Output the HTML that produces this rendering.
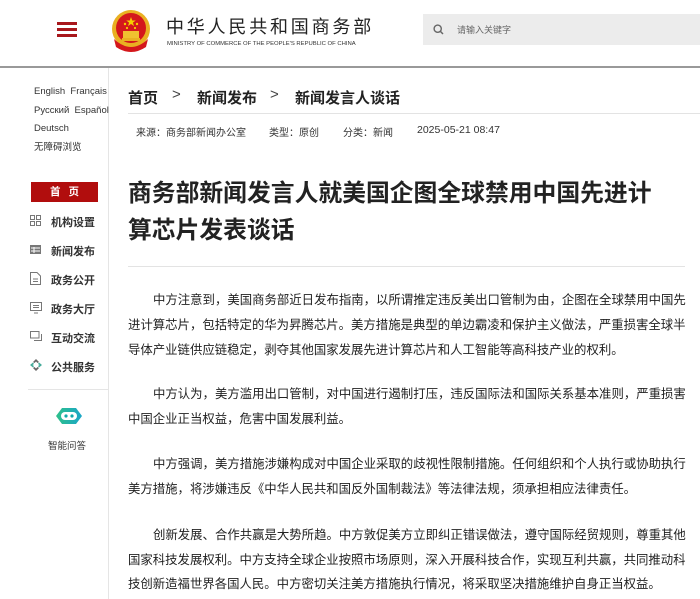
<!DOCTYPE html>
<html><head><meta charset="utf-8"><style>
*{margin:0;padding:0;box-sizing:border-box}
body{width:700px;height:599px;overflow:hidden;background:#fff;font-family:"Liberation Sans","Noto Sans CJK SC",sans-serif;color:#222;position:relative}
.a{position:absolute;white-space:nowrap}
.bar{position:absolute;left:57px;width:20px;height:3px;background:#a8171c}
.ln{position:absolute;left:128px;width:557px;font-size:12.4px;color:#222;text-align:justify;text-align-last:justify;white-space:nowrap;height:18px;line-height:18px}
.ln.l{text-align-last:left}
.mi{position:absolute;left:51px;font-size:11px;font-weight:bold;color:#333}
.ic{position:absolute;left:30px}
</style></head><body>
<div class="bar" style="top:22px"></div><div class="bar" style="top:28px"></div><div class="bar" style="top:34px"></div>
<svg class="a" style="left:110px;top:9px" width="42" height="44" viewBox="0 0 42 44">
<circle cx="21" cy="20" r="19" fill="#e9b022"/><circle cx="21" cy="19" r="15" fill="#d4171c"/>
<polygon points="21,8 22.2,11.5 25.8,11.5 22.9,13.6 24,17 21,15 18,17 19.1,13.6 16.2,11.5 19.8,11.5" fill="#f5d000"/>
<circle cx="15" cy="15" r="1.2" fill="#f5d000"/><circle cx="27" cy="15" r="1.2" fill="#f5d000"/><circle cx="17" cy="19" r="1.1" fill="#f5d000"/><circle cx="25" cy="19" r="1.1" fill="#f5d000"/>
<rect x="13" y="22" width="16" height="7" fill="#f0c030"/><rect x="12" y="29" width="18" height="3" fill="#e9b022"/>
<path d="M4 30 Q21 46 38 30 L36 38 Q21 48 6 38Z" fill="#d4171c"/>
</svg>
<div class="a" style="left:166px;top:13px;font-size:18px;letter-spacing:2.8px;color:#222">中华人民共和国商务部</div>
<div class="a" style="left:167px;top:41px;font-size:5.9px;color:#333">MINISTRY OF COMMERCE OF THE PEOPLE'S REPUBLIC OF CHINA</div>
<div class="a" style="left:423px;top:14px;width:277px;height:31px;background:#ececec"></div>
<svg class="a" style="left:433px;top:24px" width="11" height="11" viewBox="0 0 11 11"><circle cx="4.7" cy="4.7" r="3.6" fill="none" stroke="#666" stroke-width="1.4"/><line x1="7.4" y1="7.4" x2="10" y2="10" stroke="#666" stroke-width="1.5"/></svg>
<div class="a" style="left:457px;top:23px;font-size:9px;color:#666">请输入关键字</div>
<div class="a" style="left:0;top:66px;width:700px;height:2px;background:#999"></div>
<div class="a" style="left:108px;top:68px;width:1px;height:531px;background:#e5e5e5"></div>
<div class="a" style="left:34px;top:83px;font-size:9.5px;color:#333;line-height:18.5px">English&nbsp; Français<br>Русский&nbsp; Español<br>Deutsch<br>无障碍浏览</div>
<div class="a" style="left:31px;top:182px;width:67px;height:20px;background:#b10d0d;color:#fff;font-size:10.5px;font-weight:bold;text-align:center;line-height:20px;letter-spacing:8px;padding-left:8px">首页</div>
<svg class="ic" style="top:215px" width="11" height="11"><g fill="none" stroke="#777" stroke-width="1"><rect x=".5" y=".5" width="4" height="4"/><rect x="6.5" y=".5" width="4" height="4"/><rect x=".5" y="6.5" width="4" height="4"/><rect x="6.5" y="6.5" width="4" height="4"/></g></svg>
<div class="mi" style="top:214px">机构设置</div>
<svg class="ic" style="top:245px" width="11" height="9"><rect width="11" height="9" fill="#777"/><g stroke="#fff"><line x1="1" y1="3" x2="10" y2="3"/><line x1="1" y1="6" x2="10" y2="6"/><line x1="4" y1="2" x2="4" y2="8"/></g></svg>
<div class="mi" style="top:243px">新闻发布</div>
<svg class="ic" style="top:272px" width="11" height="13"><path d="M.5 .5H7L10.5 4V12.5H.5Z" fill="none" stroke="#777"/><g stroke="#777"><line x1="3" y1="7" x2="8" y2="7"/><line x1="3" y1="9.5" x2="8" y2="9.5"/></g></svg>
<div class="mi" style="top:272px">政务公开</div>
<svg class="ic" style="top:302px" width="12" height="12"><rect x=".5" y=".5" width="11" height="8" fill="none" stroke="#777"/><g stroke="#777"><line x1="3" y1="3.5" x2="9" y2="3.5"/><line x1="3" y1="5.5" x2="9" y2="5.5"/><line x1="4" y1="11" x2="8" y2="11"/></g></svg>
<div class="mi" style="top:301px">政务大厅</div>
<svg class="ic" style="top:331px" width="12" height="12"><path d="M.5 .5H9V7H.5Z M4 9.5H11.5V3" fill="none" stroke="#777"/></svg>
<div class="mi" style="top:330px">互动交流</div>
<svg class="ic" style="top:359px" width="12" height="12"><g fill="#666"><path d="M6 0L9 3L7.5 4L6 2.5L4.5 4L3 3Z"/><path d="M6 12L3 9L4.5 8L6 9.5L7.5 8L9 9Z"/><path d="M0 6L3 3.5L4 5L2.5 6L4 7L3 8.5Z" fill="#4a9"/><path d="M12 6L9 8.5L8 7L9.5 6L8 5L9 3.5Z" fill="#4a9"/></g></svg>
<div class="mi" style="top:359px">公共服务</div>
<div class="a" style="left:28px;top:389px;width:80px;height:1px;background:#e5e5e5"></div>
<svg class="a" style="left:55px;top:406px" width="28" height="20" viewBox="0 0 28 20"><defs><linearGradient id="g" x1="0" x2="1"><stop offset="0" stop-color="#2ec08a"/><stop offset="1" stop-color="#1aa6c8"/></linearGradient></defs><path d="M7 2H21L27 10L21 18H7L1 10Z" fill="url(#g)"/><rect x="6" y="6" width="16" height="8" rx="4" fill="#fff"/><circle cx="11" cy="10" r="1.6" fill="#1aa"/><circle cx="17" cy="10" r="1.6" fill="#1aa"/></svg>
<div class="a" style="left:48px;top:438px;font-size:9.5px;color:#333">智能问答</div>
<div class="a" style="left:128px;top:87px;font-size:15px;font-weight:bold;color:#222">首页</div>
<div class="a" style="left:172px;top:86px;font-size:15px;color:#444">&gt;</div>
<div class="a" style="left:197px;top:87px;font-size:15px;font-weight:bold;color:#222">新闻发布</div>
<div class="a" style="left:270px;top:86px;font-size:15px;color:#444">&gt;</div>
<div class="a" style="left:295px;top:87px;font-size:15px;font-weight:bold;color:#222">新闻发言人谈话</div>
<div class="a" style="left:128px;top:113px;width:572px;height:1px;background:#e3e3e3"></div>
<div class="a" style="left:136px;top:124px;font-size:10px;color:#333">来源：商务部新闻办公室</div>
<div class="a" style="left:269px;top:124px;font-size:10px;color:#333">类型：原创</div>
<div class="a" style="left:343px;top:124px;font-size:10px;color:#333">分类：新闻</div>
<div class="a" style="left:417px;top:124px;font-size:10.5px;color:#333">2025-05-21 08:47</div>
<div class="a" style="left:128px;top:175px;font-size:23.8px;font-weight:bold;color:#222;line-height:37px">商务部新闻发言人就美国企图全球禁用中国先进计<br>算芯片发表谈话</div>
<div class="a" style="left:128px;top:266px;width:557px;height:1px;background:#e3e3e3"></div>
<div class="ln" style="top:291px;padding-left:25px">中方注意到，美国商务部近日发布指南，以所谓推定违反美出口管制为由，企图在全球禁用中国先</div>
<div class="ln" style="top:316px">进计算芯片，包括特定的华为昇腾芯片。美方措施是典型的单边霸凌和保护主义做法，严重损害全球半</div>
<div class="ln l" style="top:341px">导体产业链供应链稳定，剥夺其他国家发展先进计算芯片和人工智能等高科技产业的权利。</div>
<div class="ln" style="top:385px;padding-left:25px">中方认为，美方滥用出口管制，对中国进行遏制打压，违反国际法和国际关系基本准则，严重损害</div>
<div class="ln l" style="top:410px">中国企业正当权益，危害中国发展利益。</div>
<div class="ln" style="top:455px;padding-left:25px">中方强调，美方措施涉嫌构成对中国企业采取的歧视性限制措施。任何组织和个人执行或协助执行</div>
<div class="ln l" style="top:480px">美方措施，将涉嫌违反《中华人民共和国反外国制裁法》等法律法规，须承担相应法律责任。</div>
<div class="ln" style="top:526px;padding-left:25px">创新发展、合作共赢是大势所趋。中方敦促美方立即纠正错误做法，遵守国际经贸规则，尊重其他</div>
<div class="ln" style="top:551px">国家科技发展权利。中方支持全球企业按照市场原则，深入开展科技合作，实现互利共赢，共同推动科</div>
<div class="ln l" style="top:575px">技创新造福世界各国人民。中方密切关注美方措施执行情况，将采取坚决措施维护自身正当权益。</div>
</body></html>
